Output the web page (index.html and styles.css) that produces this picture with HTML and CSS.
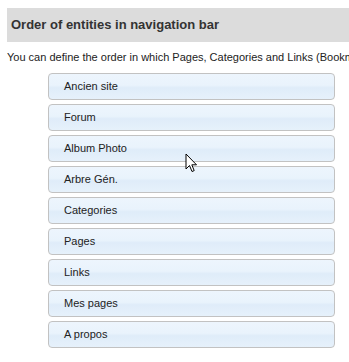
FILE: index.html
```html
<!DOCTYPE html>
<html>
<head>
<meta charset="utf-8">
<link rel="stylesheet" href="styles.css">
</head>
<body>
<div class="page">
  <h2 class="section-title">Order of entities in navigation bar</h2>
  <p class="intro">You can define the order in which Pages, Categories and Links (Bookmarks) appear in the navigation bar.</p>
  <ul class="sortable">
    <li class="item">Ancien site</li>
    <li class="item">Forum</li>
    <li class="item">Album Photo</li>
    <li class="item">Arbre Gén.</li>
    <li class="item">Categories</li>
    <li class="item">Pages</li>
    <li class="item">Links</li>
    <li class="item">Mes pages</li>
    <li class="item">A propos</li>
  </ul>
</div>
<svg class="cursor" width="13" height="20" viewBox="0 0 13 20"><path d="M1 1 L1 16 L4.5 12.5 L7 18.5 L9.2 17.6 L6.8 11.8 L11.5 11.8 Z" fill="#fff" stroke="#000" stroke-width="1" stroke-linejoin="miter"/></svg>
</body>
</html>
```
FILE: styles.css
```css
html, body {
  margin: 0;
  padding: 0;
  background: #fff;
  overflow: hidden;
}
body {
  font-family: "Liberation Sans", Arial, sans-serif;
  color: #222;
  position: relative;
  width: 349px;
  height: 362px;
}
.page {
  padding: 8px 0 0 7px;
}
.section-title {
  margin: 0;
  background: #dcdcdc;
  height: 34px;
  line-height: 34px;
  padding-left: 4px;
  font-size: 13px;
  font-weight: bold;
  color: #333;
  white-space: nowrap;
}
.intro {
  margin: 9px 0 0 0;
  font-size: 11px;
  line-height: 13px;
  white-space: nowrap;
  overflow: hidden;
  color: #222;
}
.sortable {
  list-style: none;
  margin: 9px 0 0 41px;
  padding: 0;
  width: 287px;
  display: flex;
  flex-direction: column;
  gap: 4px;
}
.item {
  box-sizing: border-box;
  height: 27px;
  border: 1px solid #c2c2c2;
  border-radius: 4px;
  background: linear-gradient(to bottom, #edf5fd 0%, #e9f3fc 45%, #dfecf9 55%, #e6f1fb 100%);
  padding-left: 15px;
  line-height: 25px;
  font-size: 11px;
  color: #222;
}
.cursor {
  position: absolute;
  left: 185px;
  top: 153px;
}
```
